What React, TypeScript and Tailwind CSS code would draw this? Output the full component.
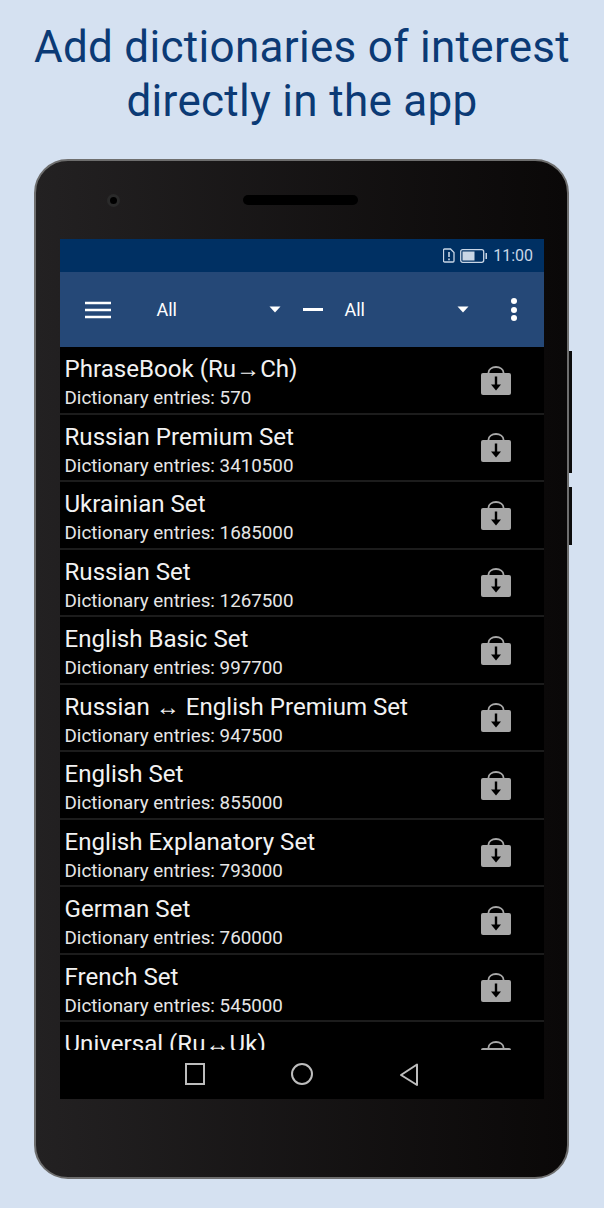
const ROWS: { name: string; count?: number }[] = [
  { name: "PhraseBook (Ru→Ch)", count: 570 },
  { name: "Russian Premium Set", count: 3410500 },
  { name: "Ukrainian Set", count: 1685000 },
  { name: "Russian Set", count: 1267500 },
  { name: "English Basic Set", count: 997700 },
  { name: "Russian ↔ English Premium Set", count: 947500 },
  { name: "English Set", count: 855000 },
  { name: "English Explanatory Set", count: 793000 },
  { name: "German Set", count: 760000 },
  { name: "French Set", count: 545000 },
  { name: "Universal (Ru↔Uk)" },
];

function BagIcon() {
  return (
    <svg width="32" height="30" viewBox="0 0 32 30" className="shrink-0">
      <path d="M8.500 8V6.500a7.500 5.500 0 0 1 15 0V8" fill="none" stroke="#a8a8a8" strokeWidth="1.800" />
      <rect x="1" y="7" width="30" height="22" rx="2" fill="#a8a8a8" />
      <path d="M16 10.500v10" stroke="#000" strokeWidth="2.400" />
      <path d="M11 18.500h10L16 24.500z" fill="#000" />
    </svg>
  );
}

function Caret() {
  return (
    <svg width="12" height="7" viewBox="0 0 12 7">
      <path d="M0.500 0.500h11L6 6.500z" fill="#fff" />
    </svg>
  );
}

function Row({ name, count }: { name: string; count?: number }) {
  return (
    <div className="flex h-[67.5px] shrink-0 items-start justify-between border-b-2 border-[#1c1c1c] pl-[5px] pr-[31.5px]">
      <div className="flex flex-col pt-[6px]">
        <span className="text-[24.1px] leading-[32px] text-[#f2f2f2]">{name}</span>
        {count !== undefined && (
          <span className="text-[18.8px] leading-[26px] text-[#e6e6e6]">Dictionary entries: {count}</span>
        )}
      </div>
      <div className="mt-[18.500px]">
        <BagIcon />
      </div>
    </div>
  );
}

export default function App() {
  return (
    <div className="flex h-[1208px] w-[604px] flex-col items-center overflow-hidden bg-[#d5e1f1] font-['Roboto',sans-serif]">
      <h1 className="mt-[20px] text-center text-[44px] leading-[54px] font-normal tracking-[0.3px] text-[#0b3a75]">
        Add dictionaries of interest
        <br />
        directly in the app
      </h1>

      <div className="relative mt-[31px] ml-[-1px] flex h-[1020px] w-[535px] flex-col items-center rounded-[34px] border-2 border-[#6e6e6e] bg-gradient-to-r from-[#232122] to-[#0a0808]">
        <div className="absolute top-[190px] right-[-5px] h-[122px] w-[3px] bg-[#0c0c0c]" />
        <div className="absolute top-[326px] right-[-5px] h-[58px] w-[3px] bg-[#0c0c0c]" />

        <div className="flex h-[78px] w-full shrink-0 items-center pl-[71px]">
          <div className="h-[13px] w-[13px] rounded-full border-[3px] border-[#2a2a2a] bg-black" />
          <div className="ml-[123px] h-[10px] w-[115px] rounded-full bg-black" />
        </div>

        <div className="flex w-[484px] flex-col">
          <div className="flex h-[33px] items-center justify-end gap-[5px] bg-[#003063] pr-[10.500px] text-[16px] text-[#c9d6e6]">
            <svg width="12" height="15" viewBox="0 0 12 15">
              <path d="M1.500 1h6l3.500 3.500V13a1 1 0 0 1-1 1h-8.500a1 1 0 0 1-1-1V2a1 1 0 0 1 1-1z" fill="none" stroke="#c9d6e6" strokeWidth="1.300" />
              <path d="M6 4v5M6 10.500v1.800" stroke="#c9d6e6" strokeWidth="1.600" />
            </svg>
            <svg width="28" height="14" viewBox="0 0 28 14">
              <rect x="0.700" y="0.700" width="23" height="12.600" rx="2" fill="none" stroke="#c9d6e6" strokeWidth="1.300" />
              <rect x="2.500" y="2.500" width="12" height="9" fill="#c9d6e6" />
              <rect x="25.500" y="4" width="1.500" height="6" fill="#c9d6e6" />
            </svg>
            <span>11:00</span>
          </div>

          <div className="flex h-[75px] items-center bg-[#254877] text-[18px] text-white">
            <svg width="26" height="18" viewBox="0 0 26 18" className="ml-[25px]">
              <path d="M0 2h26M0 9h26M0 16h26" stroke="#fff" strokeWidth="2.500" />
            </svg>
            <div className="ml-[46px] flex w-[124px] items-center justify-between">
              <span>All</span>
              <Caret />
            </div>
            <div className="ml-[22px] h-[3px] w-[20px] bg-white" />
            <div className="ml-[22px] flex w-[124px] items-center justify-between">
              <span>All</span>
              <Caret />
            </div>
            <div className="ml-[42px] flex flex-col gap-[2.500px]">
              <div className="h-[6px] w-[6px] rounded-full bg-white" />
              <div className="h-[6px] w-[6px] rounded-full bg-white" />
              <div className="h-[6px] w-[6px] rounded-full bg-white" />
            </div>
          </div>

          <div className="flex h-[703px] flex-col overflow-hidden bg-black">
            {ROWS.map((r) => (
              <Row key={r.name} name={r.name} count={r.count} />
            ))}
          </div>

          <div className="flex h-[49px] items-start justify-center gap-[86px] bg-black pt-[13px]">
            <div className="h-[22px] w-[20px] border-2 border-[#bdbdbd]" />
            <div className="h-[22px] w-[22px] rounded-full border-2 border-[#bdbdbd]" />
            <svg width="20" height="24" viewBox="0 0 20 24">
              <path d="M18 1.500v20.500L2 12z" fill="none" stroke="#bdbdbd" strokeWidth="2" strokeLinejoin="round" />
            </svg>
          </div>
        </div>
      </div>
    </div>
  );
}
